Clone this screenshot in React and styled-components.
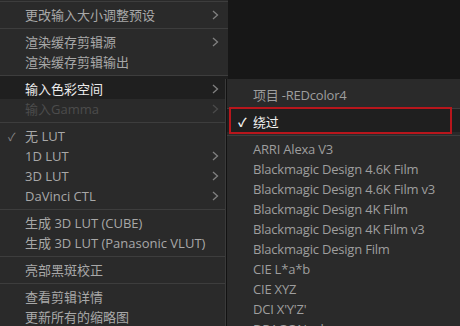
import styled, { createGlobalStyle } from "styled-components";

const GlobalStyle = createGlobalStyle`
  html, body {
    margin: 0;
    padding: 0;
    background: #171717;
    overflow: hidden;
  }
  body {
    font-family: "Open Sans", "Noto Sans CJK SC", sans-serif;
    font-size: 13px;
  }
`;

const Chevron = ({ dim }) => (
  <svg width="7" height="10" viewBox="0 0 7 10">
    <polyline
      points="1,1 5.5,5 1,9"
      fill="none"
      stroke={dim ? "#4a4a4a" : "#808080"}
      strokeWidth="1.3"
    />
  </svg>
);

const leftMenu = [
  { sep: true, top: true },
  { label: "更改输入大小调整预设", sub: true },
  { sep: true },
  { label: "渲染缓存剪辑源", sub: true },
  { label: "渲染缓存剪辑输出" },
  { sep: true },
  { label: "输入色彩空间", sub: true, active: true },
  { label: "输入Gamma", sub: true, disabled: true },
  { sep: true },
  { label: "无 LUT", checked: true },
  { label: "1D LUT", sub: true },
  { label: "3D LUT", sub: true },
  { label: "DaVinci CTL", sub: true },
  { sep: true },
  { label: "生成 3D LUT (CUBE)" },
  { label: "生成 3D LUT (Panasonic VLUT)" },
  { sep: true },
  { label: "亮部黑斑校正" },
  { sep: true },
  { label: "查看剪辑详情" },
  { label: "更新所有的缩略图" },
];

const colorSpaces = [
  "ARRI Alexa V3",
  "Blackmagic Design 4.6K Film",
  "Blackmagic Design 4.6K Film v3",
  "Blackmagic Design 4K Film",
  "Blackmagic Design 4K Film v3",
  "Blackmagic Design Film",
  "CIE L*a*b",
  "CIE XYZ",
  "DCI X'Y'Z'",
  "DRAGONcolor",
];

const App = () => {
  return (
    <Page>
      <GlobalStyle />
      <Menu>
        {leftMenu.map((item, i) =>
          item.sep ? (
            <Separator key={i} $top={item.top} />
          ) : (
            <Row key={i} $active={item.active} $disabled={item.disabled}>
              <Check>{item.checked ? "✓" : ""}</Check>
              <Label>{item.label}</Label>
              <Arrow>{item.sub && <Chevron dim={item.disabled} />}</Arrow>
            </Row>
          )
        )}
      </Menu>
      <SubMenu>
        <SubRow>
          <SubCheck />
          <Label>项目 -REDcolor4</Label>
        </SubRow>
        <Separator />
        <SubRow $active $marked>
          <SubCheck $on>✓</SubCheck>
          <Label>绕过</Label>
        </SubRow>
        <Separator />
        {colorSpaces.map((name) => (
          <SubRow key={name}>
            <SubCheck />
            <Label>{name}</Label>
          </SubRow>
        ))}
      </SubMenu>
    </Page>
  );
};

export default App;

const Page = styled.div`
  position: relative;
  width: 460px;
  height: 326px;
  overflow: hidden;
`;

const Menu = styled.div`
  width: 228px;
  height: 340px;
  background: #2a2a2a;
  display: flex;
  flex-direction: column;
`;

const Separator = styled.div`
  height: 1px;
  background: #3d3d3d;
  margin: ${(p) => (p.$top ? "1px 0 3px" : "3px 0")};
  flex-shrink: 0;
`;

const Row = styled.div`
  display: flex;
  align-items: center;
  flex-shrink: 0;
  height: 20px;
  color: ${(p) => (p.$disabled ? "#4c4c4c" : p.$active ? "#ececec" : "#a8a8a8")};
  background: ${(p) => (p.$active ? "#1f1f1f" : "transparent")};
  ${(p) => p.$active && "margin-top: -3px; padding-top: 3px;"}
  white-space: nowrap;
`;

const Check = styled.span`
  width: 25px;
  padding-left: 8px;
  box-sizing: border-box;
  font-size: 11px;
  color: #8a8a8a;
`;

const Label = styled.span`
  flex: 1;
  line-height: 20px;
`;

const Arrow = styled.span`
  width: 16px;
  display: flex;
  align-items: center;
`;

const SubMenu = styled.div`
  position: absolute;
  left: 226px;
  top: 79px;
  width: 240px;
  height: 260px;
  padding-top: 6px;
  background: #2a2a2a;
  border-left: 1px solid #121212;
  box-shadow: -1px 0 0 #3a3a3a;
  display: flex;
  flex-direction: column;
`;

const SubRow = styled.div`
  position: relative;
  display: flex;
  align-items: center;
  flex-shrink: 0;
  height: 20px;
  letter-spacing: -0.2px;
  color: ${(p) => (p.$active ? "#f0f0f0" : "#9e9e9e")};
  background: ${(p) => (p.$active ? "#1f1f1f" : "transparent")};
  ${(p) => p.$active && "margin-top: -3px; padding-top: 3px;"}
  white-space: nowrap;

  ${(p) =>
    p.$marked &&
    `&::after {
      content: "";
      position: absolute;
      left: 2px;
      top: -2px;
      width: 223px;
      bottom: -2px;
      border: 2px solid #b8161c;
      box-sizing: border-box;
    }`}
`;

const SubCheck = styled.span`
  width: 26px;
  padding-left: 11px;
  box-sizing: border-box;
  font-size: 12px;
  font-weight: 700;
  color: ${(p) => (p.$on ? "#f4f4f4" : "transparent")};
`;
